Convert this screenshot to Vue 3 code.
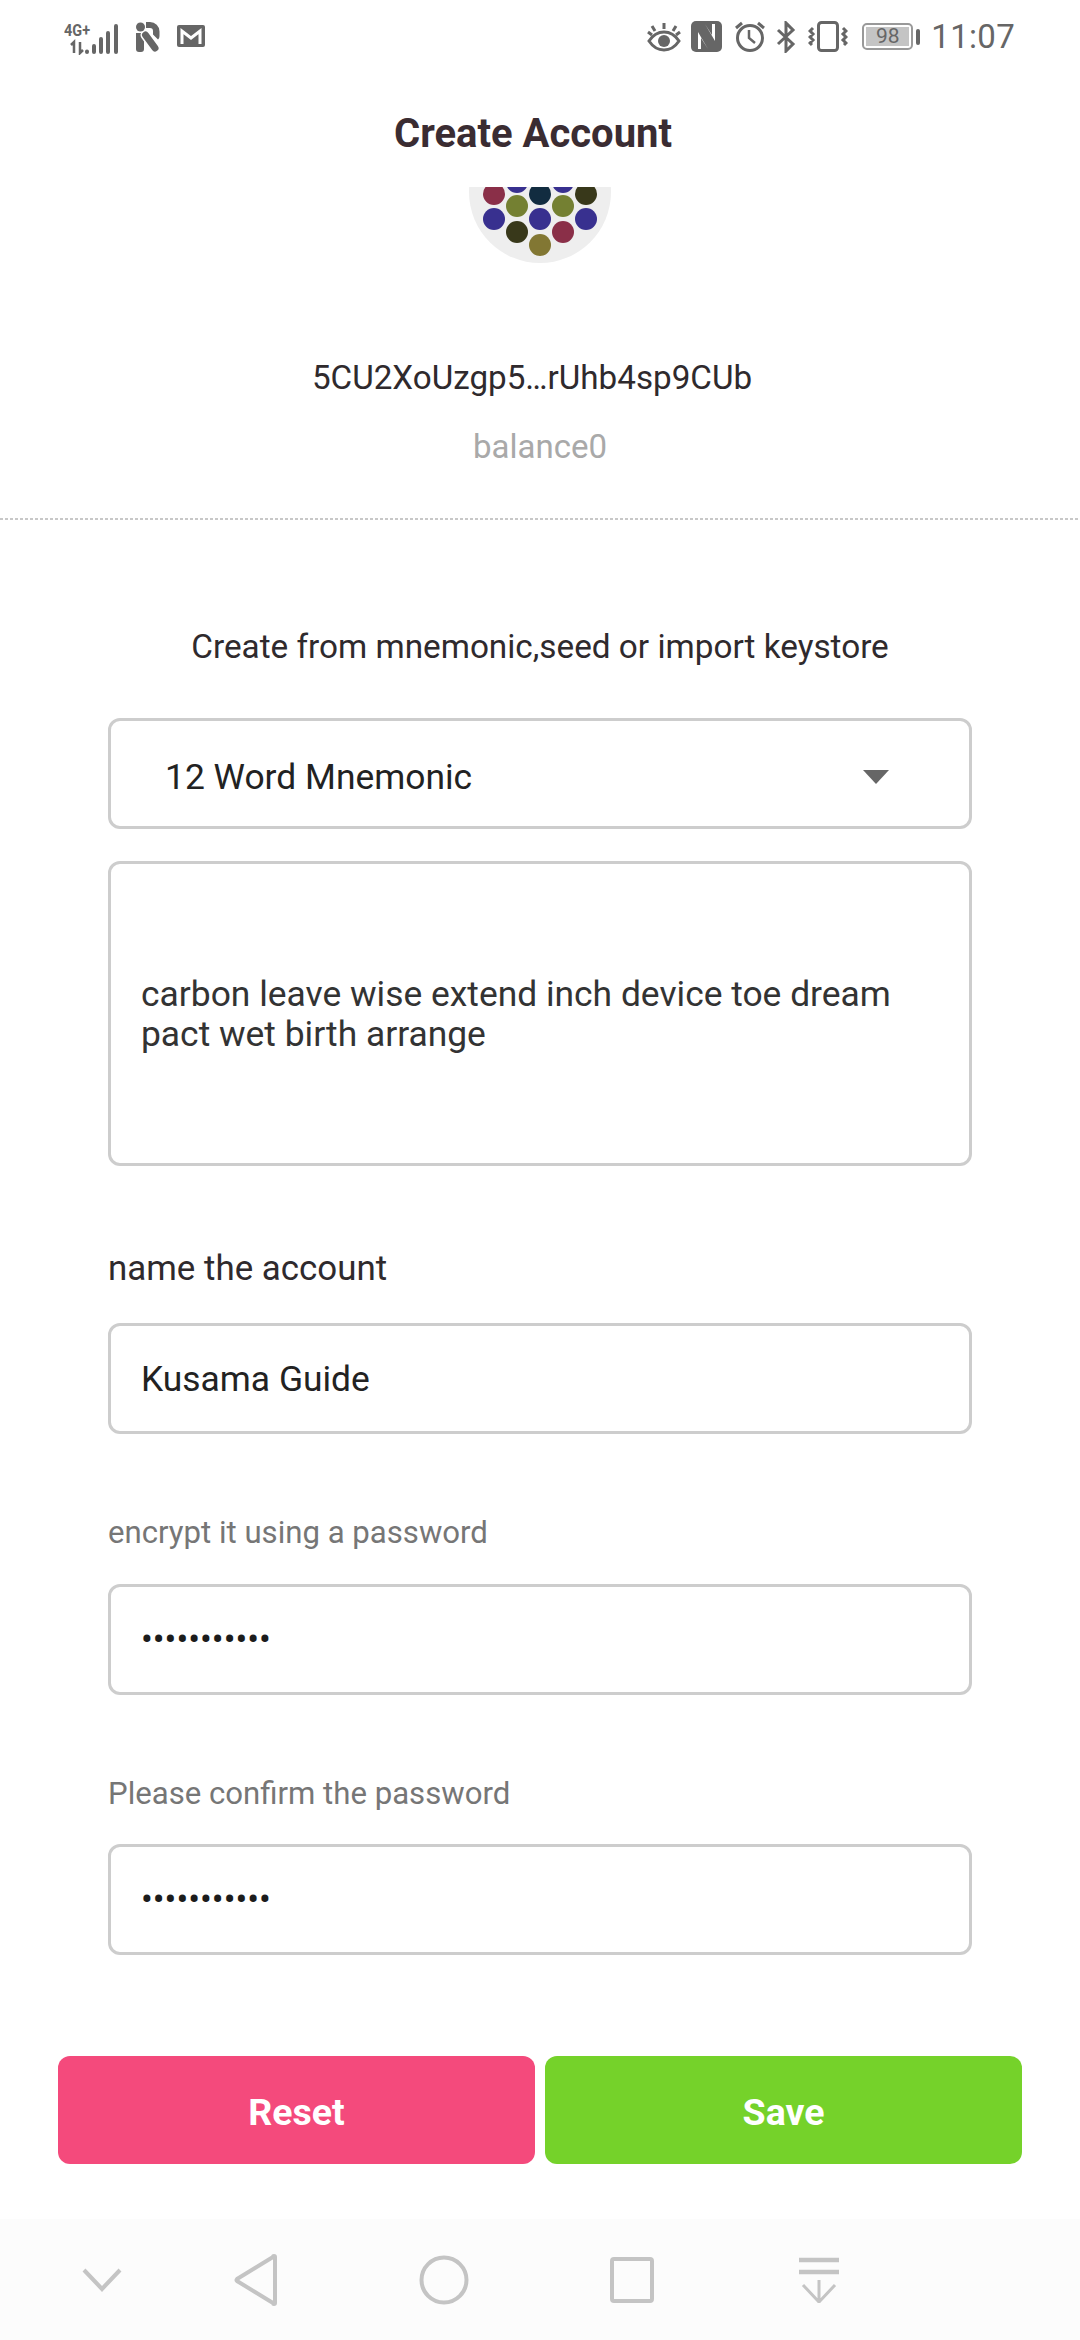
<template>
  <div class="page">
    <div class="status">
      <div class="status-left">
        <svg class="ic-signal" width="56" height="36" viewBox="0 -4 56 36">
          <text x="0" y="13" class="net" textLength="26" lengthAdjust="spacingAndGlyphs">4G+</text>
          <path d="M10 30V19l-3 3M16 19v11l3-3" fill="none" stroke="#666" stroke-width="2.500" />
          <g stroke="#666" stroke-width="4" stroke-linecap="round">
            <path d="M24 29v-.5M31 29v-6M38 29V16M45 29V10M53 29V3" transform="translate(-1 0)" />
          </g>
        </svg>
        <svg width="24" height="30" viewBox="0 0 24 30">
          <path d="M0 11h8v16a3 3 0 0 1-3 3H3a3 3 0 0 1-3-3z" fill="#666" />
          <path d="M10 0h4a9.500 9.500 0 0 1 9.500 9.500v4c0 2-.5 3-1.500 4l-5-5V9a3 3 0 0 0-3-3h-4z" fill="#666" />
          <path d="M9.500 13L19 26" stroke="#fff" stroke-width="10" stroke-linecap="round" />
          <path d="M9.500 13L19 26" stroke="#666" stroke-width="7" stroke-linecap="round" />
          <circle cx="4.500" cy="5" r="4.500" fill="#666" />
        </svg>
        <svg class="ic-mail" width="28" height="23" viewBox="0 0 28 23">
          <rect width="28" height="22" rx="2" fill="#666" />
          <path d="M5 19V6l9 7 9-7v13" fill="none" stroke="#fff" stroke-width="3" />
        </svg>
      </div>
      <div class="status-right">
        <svg width="34" height="30" viewBox="0 0 34 30">
          <path d="M2 19c4-6 9-9 15-9s11 3 15 9c-4 6-9 9-15 9S6 25 2 19z" fill="none" stroke="#666" stroke-width="3" />
          <circle cx="17" cy="19" r="6" fill="#666" />
          <path d="M17 1v6M5 4l3 5M29 4l-3 5M1 10l4 3M33 10l-4 3" stroke="#666" stroke-width="3" />
        </svg>
        <svg width="31" height="31" viewBox="0 0 31 31">
          <rect width="31" height="31" rx="5" fill="#666" />
          <path d="M9 3h5l10 17V3h-3v11L14 3zM22 28h-5L7 11v17h3V17l7 11z" fill="#fff" />
        </svg>
        <svg class="ic-alarm" width="32" height="31" viewBox="0 0 32 31">
          <circle cx="16" cy="17" r="12.500" fill="none" stroke="#666" stroke-width="3" />
          <path d="M15 9v8l6 5" fill="none" stroke="#666" stroke-width="2.500" />
          <path d="M2 7l6-5M30 7l-6-5" stroke="#666" stroke-width="3" />
        </svg>
        <svg width="20" height="32" viewBox="0 0 20 32">
          <path d="M2 9l15 14-7 7V2l7 7L2 23" fill="none" stroke="#666" stroke-width="3" />
        </svg>
        <svg class="ic-vibrate" width="40" height="32" viewBox="0 0 40 32">
          <rect x="10.500" y="1.500" width="19" height="28" rx="3" fill="none" stroke="#666" stroke-width="3" />
          <path d="M5 7L2 10l3 3-3 3 3 3-3 3 2 2M35 7l3 3-3 3 3 3-3 3 3 3-2 2" fill="none" stroke="#666" stroke-width="3" />
        </svg>
        <div class="battery">
          <div class="battery-shell"><span class="battery-level">98</span></div>
          <span class="battery-tip"></span>
        </div>
        <span class="time">11:07</span>
      </div>
    </div>

    <h1 class="title">Create Account</h1>

    <div class="account">
      <div class="avatar-clip">
        <svg width="142" height="76" viewBox="0 0 142 76">
          <circle cx="71" cy="5" r="71" fill="#eeeeee" />
          <circle v-for="(d, i) in dots" :key="i" :cx="d[0]" :cy="d[1]" r="11" :fill="d[2]" />
        </svg>
      </div>
      <div class="address">5CU2XoUzgp5…rUhb4sp9CUb</div>
      <div class="balance">balance0</div>
    </div>

    <form class="form" @submit.prevent>
      <p class="intro">Create from mnemonic,seed or import keystore</p>
      <div class="box select">
        <span>12 Word Mnemonic</span>
        <span class="caret"></span>
      </div>
      <div class="box seed">carbon leave wise extend inch device toe dream pact wet birth arrange</div>

      <label class="label label-dark">name the account</label>
      <div class="box field">Kusama Guide</div>

      <label class="label label-first">encrypt it using a password</label>
      <div class="box field dots">•••••••••••</div>

      <label class="label">Please confirm the password</label>
      <div class="box field dots">•••••••••••</div>
    </form>

    <div class="actions">
      <button class="btn reset" type="button">Reset</button>
      <button class="btn save" type="button">Save</button>
    </div>

    <div class="navbar">
      <svg class="nav-down" width="40" height="24" viewBox="0 0 40 24"><path d="M2 2l18 19L38 2" fill="none" stroke="#c4c4c4" stroke-width="4" /></svg>
      <svg width="44" height="52" viewBox="0 0 44 52"><path d="M41 3v46a1 1 0 0 1-2 0L3 27a1.500 1.500 0 0 1 0-2L39 3a1 1 0 0 1 2 0z" fill="none" stroke="#c4c4c4" stroke-width="4" stroke-linejoin="round" /></svg>
      <svg width="50" height="50" viewBox="0 0 50 50"><circle cx="25" cy="25" r="22.500" fill="none" stroke="#c4c4c4" stroke-width="4" /></svg>
      <svg width="44" height="46" viewBox="0 0 44 46"><rect x="2" y="2" width="40" height="42" rx="2" fill="none" stroke="#c4c4c4" stroke-width="4" /></svg>
      <svg class="nav-shade" width="42" height="46" viewBox="0 0 42 46">
        <path d="M1 3h40M1 15h40" stroke="#c4c4c4" stroke-width="4.500" />
        <path d="M21 23v21M5 28l16 17 16-17" fill="none" stroke="#c4c4c4" stroke-width="3" />
      </svg>
    </div>
  </div>
</template>

<script setup>
const blue = '#38308f'
const red = '#8a2f48'
const olive = '#748032'
const dark = '#38381a'
const navy = '#122c40'
const khaki = '#827733'
// polkadot style identicon, centre of the disc is at 71,5
const dots = [
  [25, 7, red], [48, -5, blue], [71, 7, navy], [94, -5, blue], [117, 7, dark],
  [48, 19, olive], [94, 19, olive],
  [25, 32, blue], [71, 32, blue], [117, 32, blue],
  [48, 45, dark], [94, 45, red],
  [71, 58, khaki]
]
</script>

<style>
html, body { background: #fff; }
</style>

<style scoped>
.page {
  width: 1080px;
  height: 2340px;
  display: flex;
  flex-direction: column;
  background: #fff;
  font-family: Roboto, "Liberation Sans", sans-serif;
  color: #2f2a2d;
  overflow: hidden;
}
.status {
  height: 75px;
  display: flex;
  justify-content: space-between;
  align-items: center;
  padding: 0 65px 2px 64px;
  box-sizing: border-box;
}
.status-left, .status-right { display: flex; align-items: center; }
.status-left { gap: 16px; }
.status-right { gap: 10px; }
.net { font-size: 16px; font-weight: 700; fill: #666; font-family: Roboto, sans-serif; }
.ic-mail { margin-left: 1px; }
.ic-alarm { margin-left: 2px; }
.ic-vibrate { margin-left: 2px; }
.battery { display: flex; align-items: center; gap: 3px; margin-left: 4px; }
.battery-shell {
  width: 51px;
  height: 27px;
  box-sizing: border-box;
  border: 2px solid #999;
  border-radius: 5px;
  padding: 2px;
  display: flex;
}
.battery-level {
  flex: 1;
  background: #c4c4c4;
  color: #666;
  font-size: 21px;
  line-height: 19px;
  text-align: center;
}
.battery-tip { width: 4px; height: 16px; border-radius: 2px; background: #666; }
.time { font-size: 33px; color: #666; margin-left: 1px; letter-spacing: .3px; }
.title {
  margin: 0;
  padding-right: 14px;
  height: 112px;
  line-height: 118px;
  font-size: 40px;
  font-weight: 700;
  text-align: center;
  color: #3a2c32;
}
.account {
  height: 333px;
  box-sizing: border-box;
  background: repeating-linear-gradient(90deg, #c8c8c8 0 3px, transparent 3px 5px) bottom / 100% 2px no-repeat;
  text-align: center;
}
.avatar-clip { height: 76px; display: flex; justify-content: center; }
.address { margin-top: 95px; padding-right: 16px; font-size: 33.200px; line-height: 40px; color: #2f2a2d; }
.balance { margin-top: 29px; font-size: 33px; line-height: 40px; color: #a9a9a9; }
.form { padding: 0 108px; margin: 0; display: flex; flex-direction: column; }
.intro {
  margin: 107px 0 0;
  height: 91px;
  font-size: 33.300px;
  line-height: 40px;
  text-align: center;
  color: #2f2a2d;
}
.box {
  box-sizing: border-box;
  border: 3px solid #cdcdcd;
  border-radius: 12px;
  font-size: 35.400px;
  color: #222;
  background: #fff;
}
.select {
  height: 111px;
  padding: 7px 80px 0 54px;
  display: flex;
  align-items: center;
  justify-content: space-between;
}
.caret {
  width: 0;
  height: 0;
  border-left: 13px solid transparent;
  border-right: 13px solid transparent;
  border-top: 14px solid #666;
}
.seed {
  margin-top: 32px;
  height: 305px;
  padding: 0 30px;
  display: flex;
  align-items: center;
  line-height: 40px;
  color: #333;
}
.field {
  height: 111px;
  padding: 0 30px;
  display: flex;
  align-items: center;
}
.dots { font-size: 35px; color: #1c1c1c; }
.label { display: block; margin: 79px 0 0; height: 70px; line-height: 40px; font-size: 31.150px; color: #767676; }
.label-dark { margin-top: 83px; height: 74px; font-size: 34.900px; color: #2f2a2d; }
.label-first { margin-top: 79px; height: 71px; }
.actions {
  margin-top: 101px;
  padding: 0 58px;
  display: flex;
  gap: 10px;
}
.btn {
  flex: 1;
  height: 108px;
  padding-top: 4px;
  border: 0;
  border-radius: 12px;
  color: #fff;
  font-family: inherit;
  font-size: 37.500px;
  font-weight: 700;
}
.reset { background: #f44a7c; }
.save { background: #75d22a; }
.navbar {
  margin-top: 55px;
  flex: 1;
  background: #fcfcfc;
  display: flex;
  align-items: center;
  padding-left: 82px;
  gap: 141px;
}
.nav-down { margin-right: -29px; }
.nav-shade { margin-left: 3px; }
</style>
